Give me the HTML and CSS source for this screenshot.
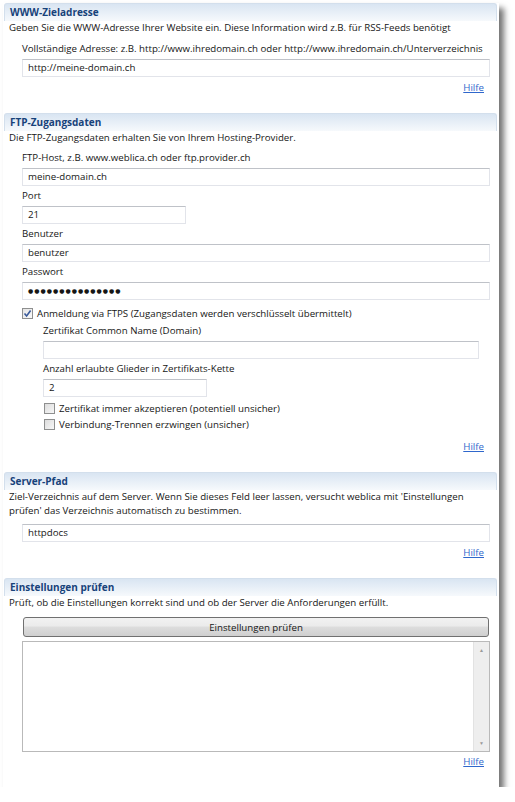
FILE: index.html
```html
<!DOCTYPE html>
<html lang="de">
<head>
  <meta charset="UTF-8" />
  <title>Veröffentlichung - Einstellungen</title>
  <link rel="stylesheet" href="styles.css">
</head>
<body>
  <div class="panel">

    <div class="section">
      <div class="sectionHead">WWW-Zieladresse</div>
      <p class="desc">Geben Sie die WWW-Adresse Ihrer Website ein. Diese Information wird z.B. für RSS-Feeds benötigt</p>
      <div class="fields first">
        <label class="labelForm">Vollständige Adresse: z.B. http://www.ihredomain.ch oder http://www.ihredomain.ch/Unterverzeichnis</label>
        <div class="inputText">http://meine-domain.ch</div>
      </div>
      <div class="help"><a href="#">Hilfe</a></div>
    </div>

    <div class="section">
      <div class="sectionHead">FTP-Zugangsdaten</div>
      <p class="desc">Die FTP-Zugangsdaten erhalten Sie von Ihrem Hosting-Provider.</p>
      <div class="fields">
        <label class="labelForm">FTP-Host, z.B. www.weblica.ch oder ftp.provider.ch</label>
        <div class="inputText">meine-domain.ch</div>
        <label class="labelForm">Port</label>
        <div class="inputText short">21</div>
        <label class="labelForm">Benutzer</label>
        <div class="inputText">benutzer</div>
        <label class="labelForm">Passwort</label>
        <div class="inputText password">&#9679;&#9679;&#9679;&#9679;&#9679;&#9679;&#9679;&#9679;&#9679;&#9679;&#9679;&#9679;&#9679;&#9679;&#9679;</div>
      </div>
      <div class="check outer">
        <span class="box checked">
          <svg width="9" height="9" viewBox="0 0 9 9"><path d="M1.5 4.5 L3.6 7 L7.6 1.5" fill="none" stroke="#3a5a9a" stroke-width="1.6"/></svg>
        </span>
        Anmeldung via FTPS (Zugangsdaten werden verschlüsselt übermittelt)
      </div>
      <div class="fields sub">
        <label class="labelForm">Zertifikat Common Name (Domain)</label>
        <div class="inputText"></div>
        <label class="labelForm">Anzahl erlaubte Glieder in Zertifikats-Kette</label>
        <div class="inputText short">2</div>
      </div>
      <div class="check inner"><span class="box"></span>Zertifikat immer akzeptieren (potentiell unsicher)</div>
      <div class="check inner"><span class="box"></span>Verbindung-Trennen erzwingen (unsicher)</div>
      <div class="help wide"><a href="#">Hilfe</a></div>
    </div>

    <div class="section">
      <div class="sectionHead">Server-Pfad</div>
      <p class="desc">Ziel-Verzeichnis auf dem Server. Wenn Sie dieses Feld leer lassen, versucht weblica mit 'Einstellungen prüfen' das Verzeichnis automatisch zu bestimmen.</p>
      <div class="fields single">
        <div class="inputText">httpdocs</div>
      </div>
      <div class="help"><a href="#">Hilfe</a></div>
    </div>

    <div class="section">
      <div class="sectionHead">Einstellungen prüfen</div>
      <p class="desc">Prüft, ob die Einstellungen korrekt sind und ob der Server die Anforderungen erfüllt.</p>
      <div class="fields first">
        <button class="sendForm" type="button">Einstellungen prüfen</button>
        <div class="log">
          <div class="logText"></div>
          <div class="scroll">
            <span class="arrow">&#9650;</span>
            <span class="arrow">&#9660;</span>
          </div>
        </div>
      </div>
      <div class="help"><a href="#">Hilfe</a></div>
    </div>

  </div>
</body>
</html>
```

FILE: styles.css
```css
body {
  margin: 0;
  background: #fff;
  font-family: 'Open Sans', 'Noto Sans', sans-serif;
  font-size: 9.7px;
  color: #161616;
}

.panel {
  margin: 3px 0 0 3px;
  width: 496px;
  height: 784px;
  background: #fff;
  box-shadow: 5px 5px 6px rgba(0, 0, 0, 0.55);
  overflow: hidden;
}

.section {
  display: flex;
  flex-direction: column;
}

.sectionHead {
  margin: 0 2px 0 1px;
  height: 17px;
  line-height: 17px;
  padding-left: 5px;
  border: 1px solid #d3dfec;
  border-bottom: none;
  border-radius: 3px 3px 0 0;
  background: linear-gradient(#d9e5f2, #f6f9fc);
  color: #17427a;
  font-weight: bold;
  font-size: 10px;
}

.desc {
  margin: 0 0 0 6px;
  line-height: 14px;
  padding-right: 25px;
}

.fields {
  display: flex;
  flex-direction: column;
  margin: 6px 9px 0 19px;
}

.fields.first {
  margin-top: 7px;
}

.fields.single {
  margin-top: 6px;
}

.fields.sub {
  margin: 3px 20px 0 40px;
}

.labelForm {
  line-height: 14px;
  margin-bottom: 3px;
}

.inputText {
  height: 16px;
  line-height: 16px;
  border: 1px solid #e2e4ea;
  border-top-color: #bfc2c8;
  padding-left: 5px;
  margin-bottom: 3px;
  white-space: nowrap;
}

.inputText.short {
  width: 157px;
}

.inputText.password {
  font-family: 'DejaVu Sans', sans-serif;
  font-size: 6px;
  letter-spacing: 1px;
}

.check {
  display: flex;
  align-items: center;
  height: 16px;
}

.check.outer {
  margin: 2px 0 0 19px;
}

.check.inner {
  margin-left: 41px;
}

.box {
  width: 9px;
  height: 9px;
  margin-right: 4px;
  border: 1px solid #8e8f8f;
  background: linear-gradient(135deg, #dcdcdc, #f7f7f7);
  display: flex;
  align-items: center;
  justify-content: center;
}

.box.checked {
  background: linear-gradient(135deg, #e4e4e4, #fafafa);
}

.help {
  text-align: right;
  margin: 1px 15px 18px 0;
  line-height: 14px;
  height: 14px;
}

.help.wide {
  margin-top: 8px;
}

.help a {
  color: #2f67cc;
  text-decoration: underline;
}

button.sendForm {
  height: 20px;
  margin: 0 1px 4px 1px;
  border: 1px solid #707070;
  border-radius: 3px;
  background: linear-gradient(#f2f2f2 0%, #ebebeb 45%, #dddddd 50%, #cfcfcf 100%);
  font-family: inherit;
  font-size: 9.7px;
  color: #161616;
}

.log {
  display: flex;
  height: 109px;
  border: 1px solid #b9b9b9;
  margin-bottom: 2px;
}

.logText {
  flex: 1;
}

.scroll {
  width: 15px;
  background: #eeeeee;
  border-left: 1px solid #e2e2e2;
  display: flex;
  flex-direction: column;
  justify-content: space-between;
  align-items: center;
  padding: 4px 0;
}

.arrow {
  font-size: 5px;
  color: #9a9a9a;
  line-height: 8px;
}
```
